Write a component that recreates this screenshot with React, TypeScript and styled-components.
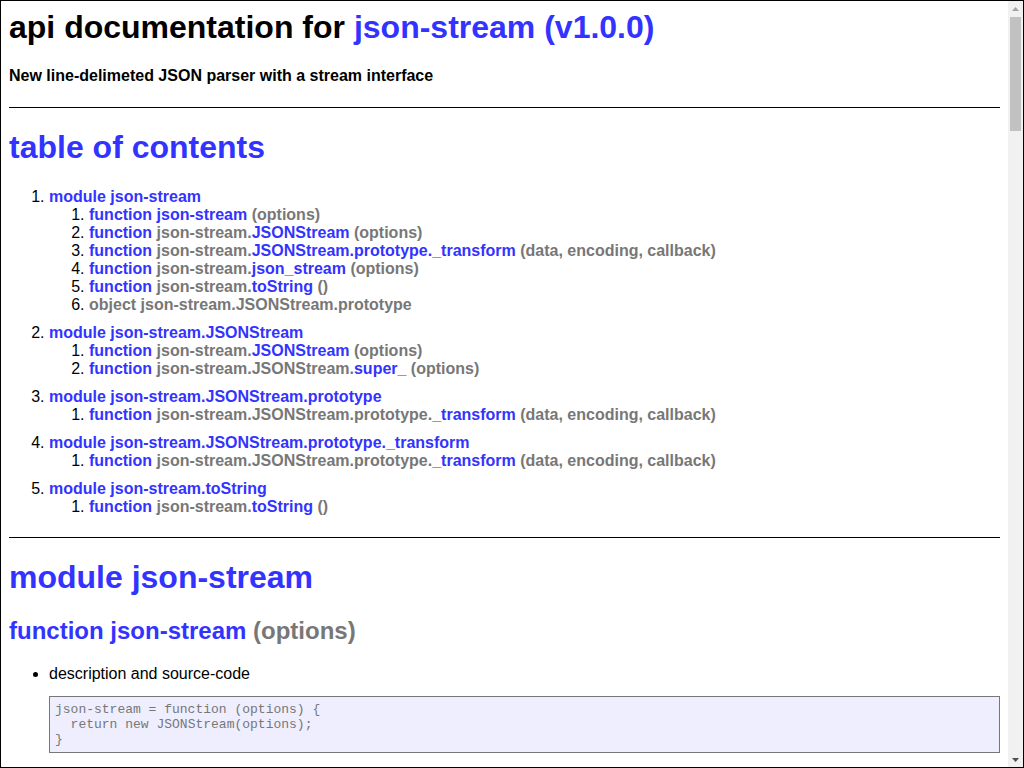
import React from "react";
import styled, { createGlobalStyle } from "styled-components";

const GlobalStyle = createGlobalStyle`
  html, body {
    margin: 0;
    padding: 0;
    height: 100%;
    overflow: hidden;
    background: #fff;
  }
`;

const Frame = styled.div`
  box-sizing: border-box;
  height: 100vh;
  border: 1px solid #000;
  display: flex;
  background: #fff;
`;

const Viewport = styled.div`
  flex: 1;
  min-width: 0;
  overflow-y: auto;
  scrollbar-width: none;
  &::-webkit-scrollbar {
    display: none;
  }
`;

const Rail = styled.div`
  width: 15px;
  flex: none;
  background: #f1f1f1;
  display: flex;
  flex-direction: column;
`;

const RailButton = styled.div`
  height: 15px;
  flex: none;
  display: flex;
  align-items: center;
  justify-content: center;
`;

const RailTrack = styled.div`
  flex: 1;
  padding: 1px 2px;
  display: flex;
  flex-direction: column;
`;

const Thumb = styled.div`
  height: 114px;
  background: #c1c1c1;
`;

const Page = styled.div`
  padding: 8px;
  font-family: "Liberation Sans", Arial, Helvetica, sans-serif;
  color: #000;
`;

const Title = styled.h1`
  font-size: 32px;
  font-weight: bold;
  margin: 0 0 21.44px;
`;

const Subtitle = styled.h4`
  font-size: 16px;
  font-weight: bold;
  margin: 21.28px 0;
`;

const Section = styled.div`
  border-top: 1px solid #000;
  margin-top: 21px;
`;

const Link = styled.a`
  color: #33f;
  font-weight: bold;
  text-decoration: none;
  &:hover {
    text-decoration: underline;
  }
`;

const BlockLink = styled(Link)`
  display: block;
`;

const SectionTitle = styled.h1`
  font-size: 32px;
  font-weight: bold;
  margin: 21.44px 0;
`;

const ElementTitle = styled.h2`
  font-size: 24px;
  font-weight: bold;
  margin: 19.92px 0;
`;

const TocList = styled.ol`
  margin: 16px 0;
  padding-left: 40px;
`;

const TocModule = styled.li`
  margin-top: 10px;
`;

const SubList = styled.ol`
  margin: 0;
  padding-left: 40px;
`;

const Sig = styled.span`
  color: #777;
  font-weight: bold;
`;

const DetailList = styled.ul`
  margin: 16px 0;
  padding-left: 40px;
`;

const CodePre = styled.pre`
  background: #eef;
  border: 1px solid #777;
  color: #777;
  padding: 5px;
  margin: 13px 0;
  white-space: pre-wrap;
  font-family: "Liberation Mono", "Courier New", monospace;
  font-size: 13px;
`;

const Footer = styled.div`
  margin-top: 20px;
  text-align: center;
`;

type Element = {
  kind: "function" | "object";
  prefix: string;
  name: string;
  sig: string;
  source: string;
  example: string;
};

type Module = {
  name: string;
  elements: Element[];
};

const srcJsonStream = `json-stream = function (options) {
  return new JSONStream(options);
}`;

const srcJSONStream = `function JSONStream(options) {
  if (!(this instanceof JSONStream)) {
    return new JSONStream(options);
  }
  options = options || {};
  Transform.call(this, {
    objectMode: true
  });
  this._buffer = '';
  this._options = options;
}`;

const srcTransform = `function (data, encoding, callback) {
  var self = this;
  this._buffer += data.toString();
  var lines = this._buffer.split(/\\r?\\n/);
  this._buffer = lines.pop();
  lines.forEach(function (line) {
    if (!line.trim()) {
      return;
    }
    try {
      self.push(JSON.parse(line));
    } catch (error) {
      self.emit('error', error);
    }
  });
  callback();
}`;

const srcToString = `function () {
    return toString;
}`;

const srcSuper = `function Transform(options) {
  if (!(this instanceof Transform))
    return new Transform(options);

  Duplex.call(this, options);

  this._transformState = new TransformState(this);

  var stream = this;

  // start out asking for a readable event once data is transformed.
  this._readableState.needReadable = true;

  // we have implemented the _read method, and done the other things
  // that Readable wants before the first _read call, so unset the
  // sync guard flag.
  this._readableState.sync = false;

  if (options) {
    if (typeof options.transform === 'function')
      this._transform = options.transform;

    if (typeof options.flush === 'function')
      this._flush = options.flush;
  }

  this.once('prefinish', function() {
    if (typeof this._flush === 'function')
      this._flush(function(er, data) {
        done(stream, er, data);
      });
    else
      done(stream);
  });
}`;

const na = "n/a";

const modules: Module[] = [
  {
    name: "json-stream",
    elements: [
      { kind: "function", prefix: "", name: "json-stream", sig: " (options)", source: srcJsonStream, example: na },
      { kind: "function", prefix: "json-stream.", name: "JSONStream", sig: " (options)", source: srcJSONStream, example: na },
      { kind: "function", prefix: "json-stream.", name: "JSONStream.prototype._transform", sig: " (data, encoding, callback)", source: srcTransform, example: na },
      { kind: "function", prefix: "json-stream.", name: "json_stream", sig: " (options)", source: srcJsonStream, example: na },
      { kind: "function", prefix: "json-stream.", name: "toString", sig: " ()", source: srcToString, example: na },
      { kind: "object", prefix: "", name: "json-stream.JSONStream.prototype", sig: "", source: "", example: "" },
    ],
  },
  {
    name: "json-stream.JSONStream",
    elements: [
      { kind: "function", prefix: "json-stream.", name: "JSONStream", sig: " (options)", source: srcJSONStream, example: na },
      { kind: "function", prefix: "json-stream.JSONStream.", name: "super_", sig: " (options)", source: srcSuper, example: na },
    ],
  },
  {
    name: "json-stream.JSONStream.prototype",
    elements: [
      { kind: "function", prefix: "json-stream.JSONStream.prototype.", name: "_transform", sig: " (data, encoding, callback)", source: srcTransform, example: na },
    ],
  },
  {
    name: "json-stream.JSONStream.prototype._transform",
    elements: [
      { kind: "function", prefix: "json-stream.JSONStream.prototype.", name: "_transform", sig: " (data, encoding, callback)", source: srcTransform, example: na },
    ],
  },
  {
    name: "json-stream.toString",
    elements: [
      { kind: "function", prefix: "json-stream.", name: "toString", sig: " ()", source: srcToString, example: na },
    ],
  },
];

const idOf = (m: Module, e: Element) => `apidoc.element.${m.name}.${e.prefix}${e.name}`;

const ElementLabel: React.FC<{ e: Element }> = ({ e }) =>
  e.kind === "object" ? (
    <Sig>object {e.name}</Sig>
  ) : (
    <>
      function {e.prefix && <Sig>{e.prefix}</Sig>}
      {e.name}
      {e.sig && <Sig>{e.sig}</Sig>}
    </>
  );

const Arrow: React.FC<{ down?: boolean; color: string }> = ({ down, color }) => (
  <svg width="7" height="4" viewBox="0 0 7 4" aria-hidden="true">
    <path d={down ? "M0 0 H7 L3.5 4 Z" : "M0 4 H7 L3.5 0 Z"} fill={color} />
  </svg>
);

export default function App() {
  return (
    <>
      <GlobalStyle />
      <Frame>
        <Viewport>
          <Page>
            <Title>
              api documentation for <Link href="#">json-stream (v1.0.0)</Link>
            </Title>
            <Subtitle>New line-delimeted JSON parser with a stream interface</Subtitle>

            <Section>
              <BlockLink href="#apidoc.tableOfContents">
                <SectionTitle>table of contents</SectionTitle>
              </BlockLink>
              <TocList>
                {modules.map((m) => (
                  <TocModule key={m.name}>
                    <Link href={`#apidoc.module.${m.name}`}>module {m.name}</Link>
                    <SubList>
                      {m.elements.map((e) => (
                        <li key={idOf(m, e)}>
                          {e.kind === "object" ? (
                            <ElementLabel e={e} />
                          ) : (
                            <Link href={`#${idOf(m, e)}`}>
                              <ElementLabel e={e} />
                            </Link>
                          )}
                        </li>
                      ))}
                    </SubList>
                  </TocModule>
                ))}
              </TocList>
            </Section>

            {modules.map((m) => (
              <Section key={m.name}>
                <BlockLink href={`#apidoc.module.${m.name}`}>
                  <SectionTitle>module {m.name}</SectionTitle>
                </BlockLink>
                {m.elements
                  .filter((e) => e.kind === "function")
                  .map((e) => (
                    <div key={idOf(m, e)}>
                      <ElementTitle>
                        <Link href={`#${idOf(m, e)}`}>
                          <ElementLabel e={e} />
                        </Link>
                      </ElementTitle>
                      <DetailList>
                        <li>
                          description and source-code
                          <CodePre>{e.source}</CodePre>
                        </li>
                        <li>
                          example usage
                          <CodePre>{e.example}</CodePre>
                        </li>
                      </DetailList>
                    </div>
                  ))}
              </Section>
            ))}

            <Footer>
              [ this document was created with{" "}
              <Link href="#">utility2</Link> ]
            </Footer>
          </Page>
        </Viewport>
        <Rail aria-hidden="true">
          <RailButton>
            <Arrow color="#a3a3a3" />
          </RailButton>
          <RailTrack>
            <Thumb />
          </RailTrack>
          <RailButton>
            <Arrow down color="#505050" />
          </RailButton>
        </Rail>
      </Frame>
    </>
  );
}
